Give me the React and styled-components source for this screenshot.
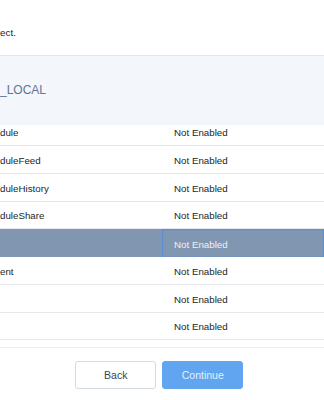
import React from 'react';
import styled, { createGlobalStyle } from 'styled-components';

const GlobalStyle = createGlobalStyle`
    html, body {
        margin: 0;
        padding: 0;
        background: #ffffff;
        overflow: hidden;
    }
    body {
        font-family: "Liberation Sans", Arial, sans-serif;
        color: #1f2227;
    }
`;

const rows = [
    { name: 'dule', status: 'Not Enabled' },
    { name: 'duleFeed', status: 'Not Enabled' },
    { name: 'duleHistory', status: 'Not Enabled' },
    { name: 'duleShare', status: 'Not Enabled' },
    { name: '', status: 'Not Enabled', selected: true },
    { name: 'ent', status: 'Not Enabled' },
    { name: '', status: 'Not Enabled' },
    { name: '', status: 'Not Enabled' }
];

const App = () => {
    return (
        <Page>
            <GlobalStyle />
            <Intro>ect.</Intro>
            <TableFrame>
                <GroupHeader>_LOCAL</GroupHeader>
                <TableBody>
                    <RowList>
                        {rows.map((row, i) => (
                            <Row key={i} selected={row.selected}>
                                <NameCell>{row.name}</NameCell>
                                <StatusCell selected={row.selected}>{row.status}</StatusCell>
                            </Row>
                        ))}
                    </RowList>
                </TableBody>
            </TableFrame>
            <Footer>
                <Button>Back</Button>
                <PrimaryButton disabled>Continue</PrimaryButton>
            </Footer>
        </Page>
    );
};

export default App;

const Page = styled.div`
    width: 324px;
    height: 400px;
    display: flex;
    flex-direction: column;
`;

const Intro = styled.p`
    margin: 0;
    height: 56px;
    box-sizing: border-box;
    padding-top: 26px;
    font-size: 9.9px;
    line-height: 14px;
    color: #1e2126;
    border-bottom: 1px solid #e3e7ec;
`;

const TableFrame = styled.div`
    height: 291px;
    display: flex;
    flex-direction: column;
    border-bottom: 1.5px solid #eceef1;
`;

const GroupHeader = styled.div`
    position: relative;
    z-index: 1;
    height: 68.5px;
    flex: none;
    display: flex;
    align-items: center;
    background: #f3f6fa;
    color: #5f7592;
    font-size: 12px;
`;

const TableBody = styled.div`
    flex: 1;
    overflow: hidden;
`;

const RowList = styled.div`
    margin-top: -6.25px;
    display: flex;
    flex-direction: column;
`;

const Row = styled.div`
    height: 27.75px;
    box-sizing: border-box;
    display: grid;
    grid-template-columns: 162px 1fr;
    border-bottom: 1.5px solid ${p => (p.selected ? '#8196b0' : '#e6e8eb')};
    background: ${p => (p.selected ? '#8196b0' : '#ffffff')};
    color: ${p => (p.selected ? '#edf1f6' : '#1c1f24')};
    font-size: 9.75px;
`;

const NameCell = styled.div`
    display: flex;
    align-items: center;
    padding-top: 2px;
    white-space: nowrap;
    overflow: hidden;
`;

const StatusCell = styled.div`
    display: flex;
    align-items: center;
    padding-left: 12px;
    padding-top: 2px;
    margin-bottom: ${p => (p.selected ? '-1.5px' : '0')};
    box-sizing: border-box;
    box-shadow: ${p => (p.selected ? 'inset 0 0 0 1.25px #5b8fd6' : 'none')};
    white-space: nowrap;
`;

const Footer = styled.div`
    display: flex;
    justify-content: center;
    gap: 6px;
    padding-top: 12.5px;
    padding-right: 5.5px;
`;

const Button = styled.button`
    width: 81px;
    height: 28px;
    border-radius: 3px;
    border: 1px solid #d4dae1;
    background: #ffffff;
    color: #3a4656;
    font-family: "Liberation Sans", Arial, sans-serif;
    font-size: 10.5px;
    padding: 0;
    cursor: pointer;
`;

const PrimaryButton = styled(Button)`
    border-color: #61a5f0;
    background: #61a5f0;
    color: #e4effc;
    cursor: not-allowed;
`;
